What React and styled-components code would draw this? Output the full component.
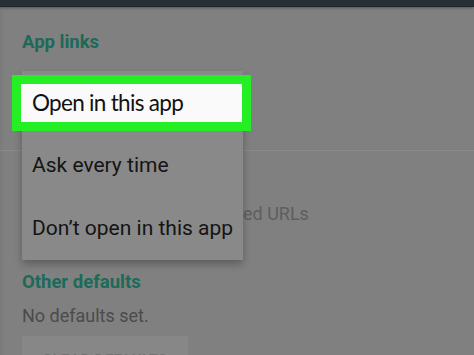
import styled, { createGlobalStyle } from 'styled-components';

const Global = createGlobalStyle`
  html, body {
    margin: 0;
    padding: 0;
    background: #808080;
  }
`;

const Screen = styled.div`
  position: relative;
  width: 474px;
  height: 355px;
  overflow: hidden;
  background: #808080;
  font-family: Roboto, 'Noto Sans', sans-serif;
  box-shadow: inset 3px 0 0 #7b7b7b;
`;

const StatusBar = styled.div`
  height: 6px;
  background: #263034;
  border-bottom: 1px solid #1f2629;
  box-shadow: 0 1px 3px rgba(0, 0, 0, 0.35);
`;

const Section = styled.div`
  padding-left: 22px;
  display: flex;
  flex-direction: column;
  align-items: flex-start;
`;

const Heading = styled.h2`
  margin: ${p => p.$top}px 0 0 0;
  font-size: 18.5px;
  line-height: 20px;
  font-weight: 700;
  color: #1b6a5a;
`;

const SettingRow = styled.div`
  height: 98px;
`;

const Divider = styled.div`
  align-self: stretch;
  height: 1px;
  background: #8a8a8a;
  margin-left: -22px;
`;

const Muted = styled.div`
  font-size: 18px;
  line-height: 22px;
  color: ${p => p.$color || '#4b4b4b'};
  white-space: nowrap;
  margin-top: ${p => p.$top || 0}px;
`;

const ClearButton = styled.div`
  margin-top: 9px;
  width: 166px;
  height: 40px;
  box-sizing: border-box;
  padding-top: 16px;
  background: #878787;
  text-align: center;
  font-size: 15px;
  line-height: 17px;
  font-weight: 500;
  letter-spacing: 0.5px;
  color: #727272;
`;

const Menu = styled.div`
  position: absolute;
  left: 22px;
  top: 71px;
  width: 221px;
  background: #898989;
  box-shadow: 0 4px 8px rgba(0, 0, 0, 0.28);
  display: flex;
  flex-direction: column;
`;

const MenuItem = styled.div`
  height: 63px;
  padding-left: 10px;
  font-size: 21px;
  line-height: 63px;
  color: #141414;
  white-space: nowrap;
`;

const Highlight = styled.div`
  margin: 4px -8px 3px -10px;
  height: 56px;
  box-sizing: border-box;
  border: 9px solid #24ee24;
  background: #fafafa;
  padding-left: 11px;
  font-family: Lato, 'Open Sans', sans-serif;
  font-size: 22.5px;
  line-height: 38px;
  letter-spacing: -0.7px;
  color: #111;
  white-space: nowrap;
`;

const options = ['Ask every time', 'Don\u2019t open in this app'];

export default function App() {
  return (
    <Screen>
      <Global />
      <StatusBar />
      <Section>
        <Heading $top={25}>App links</Heading>
        <SettingRow />
        <Divider />
        <Muted $color="#5e5e5e" $top={52}>Open without asking preferred URLs</Muted>
        <Heading $top={47}>Other defaults</Heading>
        <Muted $top={13}>No defaults set.</Muted>
        <ClearButton>CLEAR DEFAULTS</ClearButton>
      </Section>
      <Menu>
        <Highlight>Open in this app</Highlight>
        {options.map(o => (
          <MenuItem key={o}>{o}</MenuItem>
        ))}
      </Menu>
    </Screen>
  );
}
